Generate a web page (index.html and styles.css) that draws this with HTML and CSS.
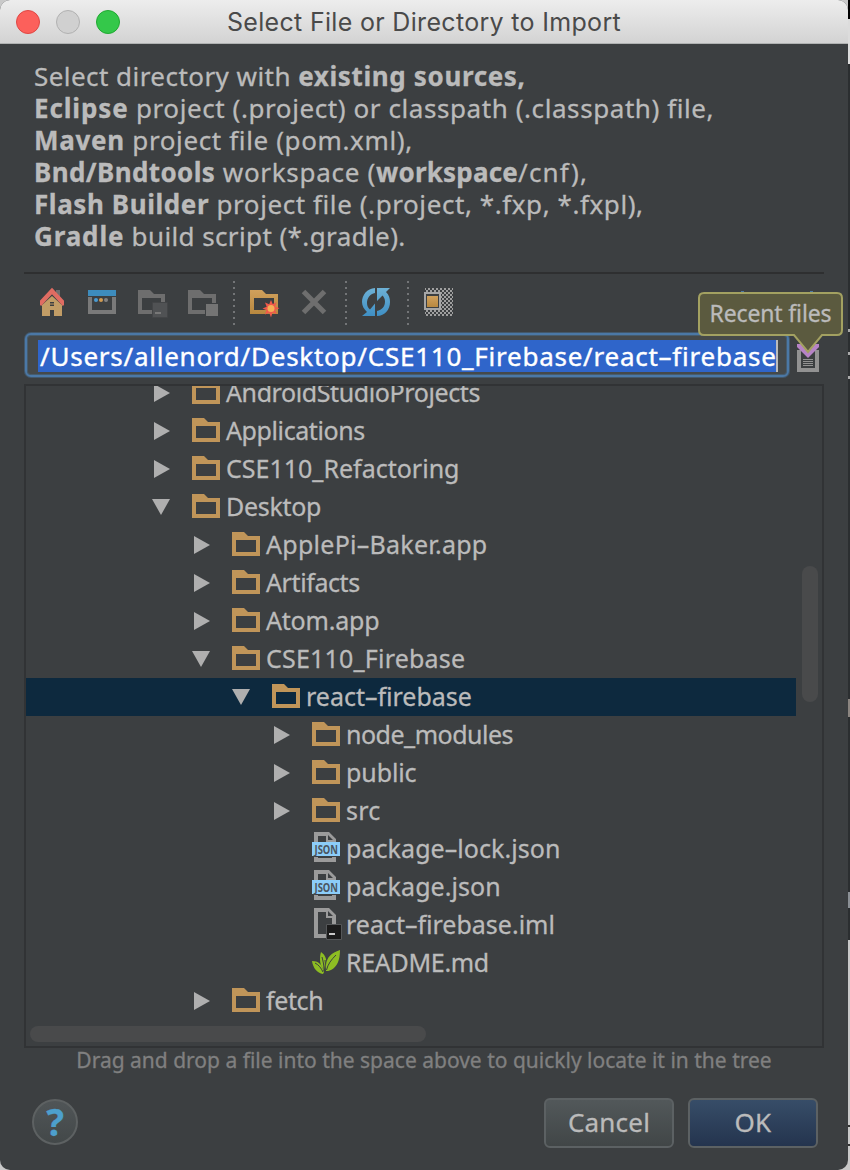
FILE: index.html
```html
<!DOCTYPE html>
<html lang="en">
<head>
<meta charset="utf-8">
<title>Select File or Directory to Import</title>
<link rel="stylesheet" href="styles.css">
</head>
<body>
<svg class="defs" width="0" height="0">
  <defs>
    <linearGradient id="blue" x1="0" y1="0" x2="0" y2="1"><stop offset="0" stop-color="#6db1d6"/><stop offset="1" stop-color="#3f8fc4"/></linearGradient>
    <linearGradient id="gold" x1="0" y1="0" x2="0" y2="1"><stop offset="0" stop-color="#d0a05c"/><stop offset="1" stop-color="#b8883f"/></linearGradient>
    <pattern id="checker" width="4" height="4" patternUnits="userSpaceOnUse"><path d="M0 0h2v2H0zM2 2h2v2H2z" fill="#a0a0a0"/></pattern>
    <symbol id="folder" viewBox="0 0 28 24"><path fill="#c09559" fill-rule="evenodd" d="M0 0h12l4 4h12v20H0zM4 8v12h20V8z"/></symbol>
    <symbol id="right" viewBox="0 0 18 18"><path fill="#afafaf" d="M2 0l16 9L2 18z"/></symbol>
    <symbol id="down" viewBox="0 0 18 18"><path fill="#afafaf" d="M0 1h18L9 17z"/></symbol>
    <symbol id="json" viewBox="0 0 30 32">
      <path fill="#9b9b9b" fill-rule="evenodd" d="M2 0h15l7 7v23H2zM6 4v22h14v-16h-6V4zM16 3v5h5z"/>
      <path fill="#3c3f41" d="M0 24h28v1H0z"/>
      <path fill="#8ccdf9" d="M0 10h28v14H0z"/>
      <text x="2.5" y="21.5" class="json-text" textLength="23.5" lengthAdjust="spacingAndGlyphs">JSON</text>
    </symbol>
    <symbol id="iml" viewBox="0 0 30 32">
      <path fill="#9b9b9b" fill-rule="evenodd" d="M2 0h15l7 7v23H2zM6 4v22h14v-16h-6V4zM16 3v5h5z"/>
      <path fill="#1b1b1b" stroke="#555759" d="M14.500 16.500h15v15h-15z"/>
      <path fill="#c8c8c8" d="M17 25h6v2h-6z"/>
    </symbol>
    <symbol id="leaf" viewBox="0 0 28 24">
      <path fill="#8dbd23" d="M28 0c0 10-3 17-9 20-2 1-4 1-5 1 0-2-.5-3 0-6C15 7 19 3 28 0z"/>
      <path fill="#8dbd23" d="M9 2c4 3 6 6 5 14l-2 4C8 16 7 9 9 2z"/>
      <path fill="#8dbd23" d="M0 11c6 0 10 3 12 11l-1 2C5 23 1 18 0 11z"/>
      <path fill="none" stroke="#3c3f41" stroke-width="1" d="M24 5c-5 5-8 9-9.500 15M10 7c1 4 2 8 2 12M3 13c4 2 6 5 8 9M13 10c1 4 0 8-1 11"/>
    </symbol>
  </defs>
</svg>
<div class="dialog">
  <div class="titlebar">
    <span class="light red"></span><span class="light gray"></span><span class="light green"></span>
    <span class="title">Select File or Directory to Import</span>
  </div>

  <div class="content">
    <div class="intro">
      <div class="line"><span class="s45">Select directory with </span><b class="s63">existing sources,</b></div>
      <div class="line"><b class="s85">Eclipse</b><span class="s56"> project (.project) or classpath (.classpath) file,</span></div>
      <div class="line"><b class="s70">Maven</b><span class="s63"> project file (pom.xml),</span></div>
      <div class="line"><b class="s37">Bnd/Bndtools</b><span class="s70"> workspace (</span><b class="s20">workspace</b><span class="s120">/cnf),</span></div>
      <div class="line"><b class="s56">Flash Builder</b><span class="s56"> project file (.project, *.fxp, *.fxpl),</span></div>
      <div class="line"><b class="s85">Gradle</b><span class="s37"> build script (*.gradle).</span></div>
    </div>

    <div class="toolbar">
      <svg class="tool" viewBox="38 286 30 32">
        <path fill="#6e6e6e" d="M56 290h4v8h-4z"/><path fill="#c29d66" d="M52 296l10 9v11H42v-11z"/>
        <path fill="none" stroke="#e06c62" stroke-width="4.500" d="M39.500 304.500L52 291l12.500 13.500"/>
        <path fill="#3c3f41" d="M38 298h2v16h-2zM64 298h2v16h-2zM50 310h4v6h-4zM50 302h4v4h-4z"/><path fill="#c29d66" d="M50 303.500h4v1h-4z"/>
      </svg>
      <svg class="tool" viewBox="88 286 30 32">
        <path fill="#3d8cbd" d="M88 290h28v6H88z"/><path fill="#7a7a7a" d="M88 297h4v13h20v-13h4v17H88z"/>
        <circle cx="96" cy="300" r="2" fill="#4a9bd1"/><circle cx="101" cy="300" r="2" fill="#d09b52"/><circle cx="106" cy="300" r="2" fill="#828282"/>
      </svg>
      <svg class="tool" viewBox="138 286 30 32">
        <path fill="#6e6e6e" fill-rule="evenodd" d="M138 290h12l4 4h11v20h-27zM142 298v12h19v-12z"/>
        <path fill="#505254" stroke="#434547" d="M152.500 302.500h15v15h-15z"/><path fill="#777" d="M155 312h6v2h-6z"/>
      </svg>
      <svg class="tool" viewBox="188 286 30 32">
        <path fill="#6e6e6e" fill-rule="evenodd" d="M188 290h12l4 4h12v20h-28zM192 298v12h20v-12z"/>
        <path fill="#3c3f41" d="M205 303h13v12h-13z"/><path fill="#747474" d="M206 304h12v12h-12z"/>
      </svg>
      <span class="sep"></span>
      <svg class="tool" viewBox="250 286 30 32">
        <path fill="url(#gold)" fill-rule="evenodd" d="M250 290h12l4 4h12v20h-28zM254 298v12h20v-12z"/>
        <path fill="#f0594a" d="M271 300l1.700 4 4-1.800-1.600 4.200 4.400 1.900-4.400 1.700 1.700 4.100-4.200-1.700L271 317.500l-1.800-4.800-4.200 1.700 1.600-4.200-4.100-1.800 4.200-1.700-1.700-4.200 4.200 1.700z"/>
        <circle cx="271" cy="308.500" r="3.500" fill="#f5af57"/>
      </svg>
      <svg class="tool" viewBox="300 286 30 32"><path fill="none" stroke="#6e6e6e" stroke-width="5" d="M303.500 291.500l21 21M324.500 291.500l-21 21"/></svg>
      <span class="sep"></span>
      <svg class="tool" viewBox="362 286 30 32">
        <path fill="url(#blue)" d="M375 288v5c-5 1-8 5-8 10 0 3 1 5 3 6.500l5-6V316h-13l5-4c-3-3-5-6-5-10 0-7 5-13.500 13-14z"/>
        <path fill="url(#blue)" d="M377 288h13l-4 4c3 3 4 6 4 10 0 7.500-5 14-13 14v-5c5-1 8-4.500 8-9.500 0-2.500-1-4.500-2.500-6L377 301z"/>
      </svg>
      <span class="sep"></span>
      <svg class="tool" viewBox="424 286 30 32">
        <path fill="url(#checker)" d="M425 288h28v28h-28z"/>
        <path fill="#3c3f41" stroke="#a6a6a6" stroke-width="2" d="M425 293h15v16h-15z"/>
        <path fill="url(#gold)" d="M427 296h11v11h-11z"/>
      </svg>
      <div class="tooltip">
        <svg class="callout" viewBox="0 0 145 60"><path fill="#4b78a6" d="M43-1h3v1h-3zM112-1h3v1h-3z"/><path fill="#5b5a3f" stroke="#a3a161" stroke-width="2" d="M6 1h133q5 0 5 5v32q0 5-5 5h-15L110 60 96 43H6q-5 0-5-5V6q0-5 5-5z"/></svg>
        <span class="tooltip-text">Recent files</span>
      </div>
    </div>

    <div class="path-row">
      <div class="path-field"><span class="path-text">/Users/allenord/Desktop/CSE110_Firebase/react–firebase</span><span class="caret"></span></div>
      <svg class="recent" viewBox="797 344 22 30">
        <path fill="#929292" d="M797 350h22v22h-22z"/><path fill="#3c3f41" d="M801 351h14v17h-14z"/>
        <path stroke="#929292" d="M803 359.500h10M803 361.500h10M803 363.500h10M803 365.500h10"/>
        <path fill="#b683c6" d="M797 344h22v3l-11 11-11-11z"/>
      </svg>
    </div>

    <div class="tree">
      <div class="rows">
        <div class="row l0"><svg class="arrow"><use href="#right"/></svg><svg class="folder"><use href="#folder"/></svg><span class="m40">AndroidStudioProjects</span></div>
        <div class="row l0"><svg class="arrow"><use href="#right"/></svg><svg class="folder"><use href="#folder"/></svg><span class="m40">Applications</span></div>
        <div class="row l0"><svg class="arrow"><use href="#right"/></svg><svg class="folder"><use href="#folder"/></svg><span class="s0">CSE110_Refactoring</span></div>
        <div class="row l0"><svg class="arrow"><use href="#down"/></svg><svg class="folder"><use href="#folder"/></svg><span class="m30">Desktop</span></div>
        <div class="row l1"><svg class="arrow"><use href="#right"/></svg><svg class="folder"><use href="#folder"/></svg><span class="s25">ApplePi–Baker.app</span></div>
        <div class="row l1"><svg class="arrow"><use href="#right"/></svg><svg class="folder"><use href="#folder"/></svg><span class="m40">Artifacts</span></div>
        <div class="row l1"><svg class="arrow"><use href="#right"/></svg><svg class="folder"><use href="#folder"/></svg><span class="m20">Atom.app</span></div>
        <div class="row l1"><svg class="arrow"><use href="#down"/></svg><svg class="folder"><use href="#folder"/></svg><span class="s20">CSE110_Firebase</span></div>
        <div class="row l2 selected"><svg class="arrow"><use href="#down"/></svg><svg class="folder"><use href="#folder"/></svg><span class="s0">react–firebase</span></div>
        <div class="row l3"><svg class="arrow"><use href="#right"/></svg><svg class="folder"><use href="#folder"/></svg><span class="m50">node_modules</span></div>
        <div class="row l3"><svg class="arrow"><use href="#right"/></svg><svg class="folder"><use href="#folder"/></svg><span class="m10">public</span></div>
        <div class="row l3"><svg class="arrow"><use href="#right"/></svg><svg class="folder"><use href="#folder"/></svg><span class="s20">src</span></div>
        <div class="row l3"><span class="arrow"></span><svg class="file"><use href="#json"/></svg><span class="s7">package–lock.json</span></div>
        <div class="row l3"><span class="arrow"></span><svg class="file"><use href="#json"/></svg><span class="s7">package.json</span></div>
        <div class="row l3"><span class="arrow"></span><svg class="file"><use href="#iml"/></svg><span class="s0">react–firebase.iml</span></div>
        <div class="row l3"><span class="arrow"></span><svg class="folder"><use href="#leaf"/></svg><span class="m30">README.md</span></div>
        <div class="row l1"><svg class="arrow"><use href="#right"/></svg><svg class="folder"><use href="#folder"/></svg><span class="m40">fetch</span></div>
      </div>
      <span class="vbar"></span><span class="hbar"></span>
    </div>

    <div class="hint">Drag and drop a file into the space above to quickly locate it in the tree</div>

    <div class="footer">
      <span class="help">?</span>
      <span class="button cancel">Cancel</span>
      <span class="button ok">OK</span>
    </div>
  </div>
</div>
<div class="backdrop"></div>
</body>
</html>
```
FILE: styles.css
```css
* { box-sizing: border-box; }
body { margin: 0; width: 850px; height: 1170px; display: flex; overflow: hidden; background: #c9c9c9; font-family: "Noto Sans", "Liberation Sans", sans-serif; color: #bbb; }
svg { display: block; flex: none; }
.defs { position: absolute; }
.dialog { width: 848px; height: 1170px; border-radius: 10px; overflow: hidden; background: #3c3f41; white-space: nowrap; -webkit-text-stroke: .3px; }
.backdrop { width: 2px; background: linear-gradient(#000 0 19px, #dcdcdc 19px 64px, #2b2e30 64px 329px, #aaa 329px 332px, #2b2e30 332px 352px, #aaa 352px 355px, #2b2e30 355px 376px, #aaa 376px 379px, #2b2e30 379px 699px, #8b8580 699px 717px, #2b2e30 717px 892px, #8b9095 892px 908px, #2b2e30 908px 940px, #c9c9c9 940px 1125px, #333 1125px 1127px, #c9c9c9 1127px 1144px, #333 1144px 1146px, #c9c9c9 1146px); }

.titlebar { height: 44px; padding: 0 16px; display: flex; align-items: center; gap: 16px; background: linear-gradient(#ededed, #d3d3d3); border-bottom: 1px solid #b0b2b2; position: relative; }
.light { width: 24px; height: 24px; border-radius: 50%; border: 1px solid; }
.red { background: #fc605b; border-color: #df4744; }
.gray { background: #d0d0d0; border-color: #b1b1b1; }
.green { background: #34c84a; border-color: #20a932; }
.title { position: absolute; left: 0; right: 0; text-align: center; font: 25px/46px Inter, sans-serif; letter-spacing: .32px; color: #4a4a4a; -webkit-text-stroke: 0; }

.intro { height: 228px; padding: 16px 0 0 34px; font-size: 26px; line-height: 32px; }
.line { white-space: pre; }

.toolbar { position: relative; height: 60px; margin: 0 24px; padding: 0 0 2px 14px; border-top: 2px solid #2e2f30; display: flex; align-items: center; gap: 20px; }
.tool { width: 30px; height: 32px; }
.sep { width: 2px; height: 44px; margin: 2px -5px 0; background: repeating-linear-gradient(#737577 0 2px, transparent 2px 6px); }

.tooltip { position: absolute; left: 674px; top: 18px; width: 145px; height: 60px; z-index: 2; }
.callout { position: absolute; width: 145px; height: 60px; overflow: visible; }
.tooltip-text { position: relative; display: block; width: 145px; text-align: center; font-size: 23px; line-height: 43px; letter-spacing: -.15px; }

.path-row { display: flex; align-items: flex-end; gap: 8px; height: 46px; padding-left: 25px; }
.path-field { width: 764px; height: 44px; margin-bottom: 1px; padding: 5px 0 0 11px; border: 2px solid #4b78a6; border-radius: 6px; background: #45494a; box-shadow: 0 0 0 1px #43586b, inset 0 0 0 1px #465c6e; display: flex; }
.path-text { height: 32px; padding-left: 2px; width: 738px; background: #2f65ca; color: #fff; font-size: 26px; line-height: 32px; letter-spacing: .75px; -webkit-text-stroke: .4px; }
.caret { width: 2px; height: 32px; background: #bbb; }
.recent { width: 22px; height: 30px; margin-bottom: 4px; }

.tree { position: relative; margin: 6px 24px 0; width: 800px; height: 664px; border: 2px solid #313335; overflow: hidden; }
.rows { margin-top: -12px; width: 770px; }
.row { height: 38px; display: flex; font-size: 25px; line-height: 36px; }
.l0 { padding-left: 126px; } .l1 { padding-left: 166px; } .l2 { padding-left: 206px; } .l3 { padding-left: 246px; }
.selected { background: #0d293e; }
.arrow { width: 18px; height: 18px; margin: 10px 22px 0 0; flex: none; }
.folder { width: 28px; height: 24px; margin: 6px 6px 0 0; }
.file { width: 30px; height: 32px; margin: 2px 4px 0 0; }
.json-text { font: bold 12px "Noto Sans", sans-serif; fill: #4b5660; -webkit-text-stroke: 0; }
.vbar { position: absolute; left: 776px; top: 180px; width: 16px; height: 136px; border-radius: 8px; background: #494a4b; }
.hbar { position: absolute; left: 4px; top: 640px; width: 396px; height: 16px; border-radius: 8px; background: #494a4b; }

.hint { height: 30px; text-align: center; font-size: 21px; line-height: 25px; color: #808080; }

.footer { display: flex; gap: 14px; padding: 20px 30px 0 32px; align-items: flex-start; }
.help { width: 46px; height: 46px; margin: 1px auto 0 0; border: 2px solid #5d6162; border-radius: 50%; background: linear-gradient(#505557, #434849); color: #4d9fcd; font-weight: bold; font-size: 37px; line-height: 41px; text-align: center; }
.button { height: 50px; border: 2px solid #5c6163; border-radius: 6px; text-align: center; font-size: 26px; line-height: 44px; width: 130px; letter-spacing: .2px; }
.cancel { background: linear-gradient(#52585a, #414647); }
.ok { background: linear-gradient(#374d68, #24344e); }

/* Tracking steps */
.s120 { letter-spacing: 1.2px; } .s85 { letter-spacing: .87px; } .s70 { letter-spacing: .7px; }
.s63 { letter-spacing: .63px; } .s56 { letter-spacing: .58px; } .s45 { letter-spacing: .45px; }
.s37 { letter-spacing: .39px; } .s25 { letter-spacing: .27px; } .s20 { letter-spacing: .2px; }
.s7 { letter-spacing: .07px; } .s0 { letter-spacing: 0; }
.m10 { letter-spacing: -.1px; } .m20 { letter-spacing: -.2px; } .m30 { letter-spacing: -.31px; }
.m40 { letter-spacing: -.4px; } .m50 { letter-spacing: -.5px; }
```
